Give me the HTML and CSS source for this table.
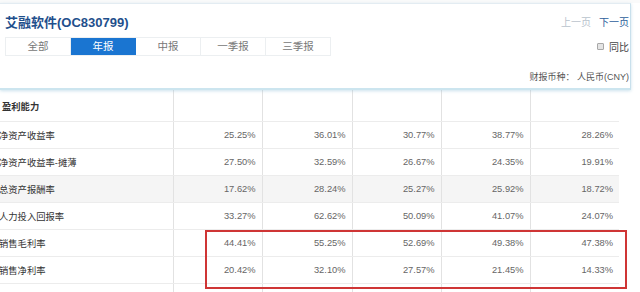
FILE: index.html
```html
<!DOCTYPE html>
<html lang="zh">
<head>
<meta charset="utf-8">
<title>艾融软件 财务指标</title>
<link rel="stylesheet" href="styles.css">
</head>
<body>
<div class="page">
  <div class="strip"></div>
  <div class="panel">
    <div class="head">
      <div class="title">艾融软件(OC830799)</div>
      <div class="pager"><span class="prev">上一页</span><span class="next">下一页</span></div>
    </div>
    <div class="tabrow">
      <div class="tabs">
        <div class="tab">全部</div>
        <div class="tab active">年报</div>
        <div class="tab">中报</div>
        <div class="tab">一季报</div>
        <div class="tab">三季报</div>
      </div>
      <label class="yoy"><span class="box"></span>同比</label>
    </div>
    <div class="currency">财报币种： 人民币(CNY)</div>
  </div>
  <table class="grid">
    <colgroup>
      <col class="c0"><col class="c1"><col class="c2"><col class="c1"><col class="c1"><col class="c1">
    </colgroup>
    <tr class="section"><td class="label">盈利能力</td><td></td><td></td><td></td><td></td><td></td></tr>
    <tr><td class="label">净资产收益率</td><td>25.25%</td><td>36.01%</td><td>30.77%</td><td>38.77%</td><td>28.26%</td></tr>
    <tr><td class="label">净资产收益率-摊薄</td><td>27.50%</td><td>32.59%</td><td>26.67%</td><td>24.35%</td><td>19.91%</td></tr>
    <tr class="shade"><td class="label">总资产报酬率</td><td>17.62%</td><td>28.24%</td><td>25.27%</td><td>25.92%</td><td>18.72%</td></tr>
    <tr><td class="label">人力投入回报率</td><td>33.27%</td><td>62.62%</td><td>50.09%</td><td>41.07%</td><td>24.07%</td></tr>
    <tr><td class="label">销售毛利率</td><td>44.41%</td><td>55.25%</td><td>52.69%</td><td>49.38%</td><td>47.38%</td></tr>
    <tr><td class="label">销售净利率</td><td>20.42%</td><td>32.10%</td><td>27.57%</td><td>21.45%</td><td>14.33%</td></tr>
    <tr><td class="label"></td><td></td><td></td><td></td><td></td><td></td></tr>
  </table>
  <div class="highlight"></div>
</div>
</body>
</html>
```
FILE: styles.css
```css
html, body {
  margin: 0;
  padding: 0;
  background: #ffffff;
}
body {
  width: 640px;
  height: 292px;
  overflow: hidden;
  font-family: "Liberation Sans", "Noto Sans CJK SC", sans-serif;
}
.page {
  position: relative;
  width: 640px;
  height: 292px;
  overflow: hidden;
}
.strip {
  height: 3px;
  background: #fafafa;
}
.panel {
  box-sizing: border-box;
  width: 631px;
  height: 87px;
  padding: 5px 1px 0 5px;
  background: #fff;
  border-top: 1px solid #e3ecf2;
  border-right: 1px solid #c8e0ec;
  border-bottom: 2px solid #cce5ef;
  box-shadow: 0 1px 3px rgba(140, 190, 215, 0.45);
  position: relative;
  z-index: 2;
}
.head {
  height: 24px;
  display: flex;
  align-items: center;
  justify-content: space-between;
}
.title {
  font-size: 13px;
  font-weight: bold;
  color: #1f4f8c;
}
.pager {
  display: flex;
  gap: 8px;
  font-size: 10px;
}
.prev { color: #b9c3cd; }
.next { color: #2d5e9b; }
.tabrow {
  margin-top: 4px;
  display: flex;
  justify-content: space-between;
  align-items: center;
}
.tabs {
  display: flex;
  border-top: 1px solid #eceff1;
  border-bottom: 1px solid #eceff1;
  border-left: 1px solid #eceff1;
}
.tab {
  box-sizing: border-box;
  width: 65px;
  height: 17px;
  line-height: 17px;
  text-align: center;
  font-size: 10.5px;
  color: #777;
  border-right: 1px solid #eceff1;
}
.tab.active {
  background: #1a75d1;
  color: #fff;
  border-right-color: #1a75d1;
}
.yoy {
  display: flex;
  align-items: center;
  font-size: 10px;
  color: #444;
  margin-top: -1px;
}
.box {
  box-sizing: border-box;
  width: 7px;
  height: 7px;
  border: 1px solid #a8a8a8;
  background: #e4e4e4;
  border-radius: 1px;
  margin-right: 5px;
}
.currency {
  margin-top: 11px;
  text-align: right;
  font-size: 9px;
  color: #555;
  height: 20px;
  line-height: 20px;
}
.grid {
  border-collapse: collapse;
  table-layout: fixed;
  margin-left: -3px;
  width: 622px;
  font-size: 9.3px;
  color: #666;
}
.grid .c0 { width: 176px; }
.grid .c1 { width: 89px; }
.grid .c2 { width: 90px; }
.grid td {
  height: 26px;
  padding: 0 6px 0 0;
  text-align: right;
  border-left: 1px solid #e2e2e2;
  border-bottom: 1px solid #ececec;
  white-space: nowrap;
}
.grid td.label {
  text-align: left;
  padding-left: 2px;
  color: #333;
  border-left: none;
}
.grid tr.section td {
  height: 31px;
}
.grid tr.section td.label {
  font-weight: bold;
  padding-left: 5px;
}
.grid tr.shade td {
  background: #f5f5f5;
}
.highlight {
  position: absolute;
  left: 205px;
  top: 230px;
  width: 422px;
  height: 59px;
  box-sizing: border-box;
  border: 2px solid #cf3535;
}
```
